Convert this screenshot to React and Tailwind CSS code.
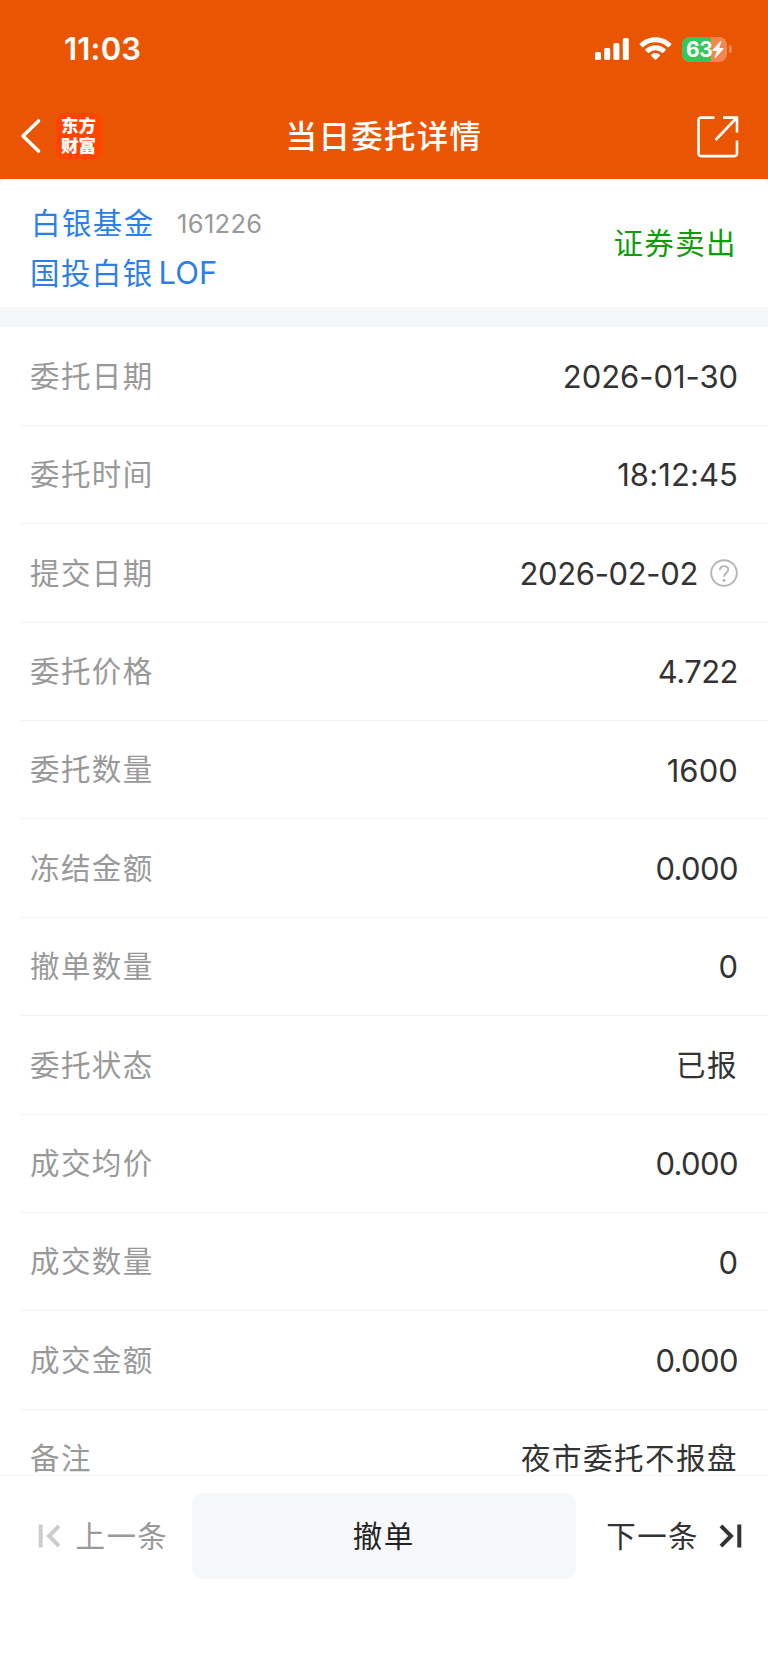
const rows = [
  { label: "委托日期", value: "2026-01-30", spacing: "tracking-[-0.05px]" },
  { label: "委托时间", value: "18:12:45", spacing: "tracking-[0.1px]" },
  { label: "提交日期", value: "2026-02-02", spacing: "tracking-[-0.35px]", help: true },
  { label: "委托价格", value: "4.722", spacing: "tracking-[-0.5px]" },
  { label: "委托数量", value: "1600", spacing: "tracking-[0.1px]" },
  { label: "冻结金额", value: "0.000", spacing: "tracking-[-0.6px]" },
  { label: "撤单数量", value: "0", spacing: "tracking-normal" },
  { label: "委托状态", value: "已报", cjk: true },
  { label: "成交均价", value: "0.000", spacing: "tracking-[-0.6px]" },
  { label: "成交数量", value: "0", spacing: "tracking-normal" },
  { label: "成交金额", value: "0.000", spacing: "tracking-[-0.6px]" },
  { label: "备注", value: "夜市委托不报盘", cjk: true },
];

const StatusBar = () => (
  <div className="flex h-[98px] items-center justify-between pl-[64px] pr-[36px]">
    <span className="pb-px text-[31px] leading-none font-semibold tracking-[0.2px]">11:03</span>
    <div className="flex items-center">
      {/* Signal */}
      <svg width="34" height="24" viewBox="0 0 34 24" fill="currentColor">
        <rect x="0" y="15" width="6" height="8" rx="1.6" />
        <rect x="9.2" y="11" width="6" height="12" rx="1.6" />
        <rect x="18.4" y="6" width="6" height="17" rx="1.6" />
        <rect x="27.8" y="1" width="6" height="22" rx="1.6" />
      </svg>
      {/* Wifi */}
      <svg className="ml-[10px]" width="33" height="24" viewBox="0 0 33 24" fill="currentColor">
        <path d="M16.5 .2c6.100 0 11.600 2.400 15.700 6.300.4.4.4.9 0 1.300l-2.300 2.300c-.4.4-.9.4-1.300 0-3.200-3-7.400-4.800-12.100-4.800S7.600 7.100 4.400 10.100c-.4.4-.9.4-1.300 0L.8 7.800c-.4-.4-.4-.9 0-1.300C4.900 2.600 10.400.2 16.500.2Z" />
        <path d="M16.500 8.200c3.900 0 7.400 1.500 10 3.900.4.4.4.9 0 1.300l-2.400 2.300c-.4.4-.9.4-1.300 0-1.700-1.500-3.900-2.400-6.300-2.400s-4.600.9-6.300 2.400c-.4.4-.9.4-1.300 0l-2.400-2.300c-.4-.4-.4-.9 0-1.300 2.600-2.400 6.100-3.900 10-3.900Z" />
        <path d="M16.500 16c1.700 0 3.200.6 4.300 1.600.4.400.4.900 0 1.300l-3.600 3.600c-.4.4-1 .4-1.400 0l-3.600-3.600c-.4-.4-.4-.9 0-1.300 1.100-1 2.600-1.600 4.300-1.600Z" />
      </svg>
      {/* Battery */}
      <div className="relative ml-[10.5px] flex h-[25px] w-[45px] items-center overflow-hidden rounded-[8px] bg-[#f08850]">
        <div className="h-full w-[29px] bg-[#34c759]" />
        <span className="absolute left-[4px] text-[21px] leading-[25px] font-bold tracking-[-0.5px]">63</span>
        <svg className="absolute left-[30px] top-[4px]" width="12" height="17" viewBox="0 0 12 17" fill="currentColor">
          <path d="M8.300.3.6 9c-.4.500-.2 1 .4 1h4l-2.200 6.100c-.2.700.5 1.100 1 .5L11.500 8c.4-.5.200-1-.4-1H7.200L9.300.8c.2-.7-.5-1-1-.5Z" />
        </svg>
      </div>
      <div className="ml-[2px] h-[8px] w-[3px] rounded-r-full bg-[#f08850]" />
    </div>
  </div>
);

const NavBar = () => (
  <div className="grid h-[77px] grid-cols-[1fr_auto_1fr] items-center pl-[20px] pr-[28px]">
    <div className="flex items-center pb-px">
      <svg width="22" height="36" viewBox="0 0 22 36" fill="none" stroke="currentColor" strokeWidth="3.6" strokeLinecap="round" strokeLinejoin="round">
        <path d="M18.500 3 3 18l15.500 15" />
      </svg>
      <div className="ml-[13.5px] flex h-[46px] w-[46px] flex-col items-center justify-center rounded-[9px] bg-[#ff4400] pb-px text-[17.5px] leading-[19.5px] font-black">
        <span>东方</span>
        <span>财富</span>
      </div>
    </div>
    <h1 className="pt-px pl-[8px] text-[31.5px] leading-none font-medium tracking-[1.3px]">当日委托详情</h1>
    <svg className="justify-self-end" width="44" height="44" viewBox="0 0 44 44" fill="none" stroke="currentColor" strokeWidth="2.6">
      <path d="M18.500 2.600H5a2.500 2.500 0 0 0-2.500 2.500v33.500a2.500 2.500 0 0 0 2.500 2.500h33.500a2.500 2.500 0 0 0 2.500-2.500V25.500" />
      <path d="M27 2.600h14V17.500M40.500 3 19.500 25" />
    </svg>
  </div>
);

const Security = () => (
  <div className="flex h-[128px] shrink-0 items-center justify-between rounded-t-[8px] bg-white px-[31px]">
    <div className="flex flex-col pt-[10px] text-[29.5px] leading-[49px] tracking-[1.4px] text-[#2c7fe8]">
      <div className="flex items-center">
        <span>白银基金</span>
        <span className="ml-[22.5px] text-[25.5px] tracking-[0.3px] text-[#999]">161226</span>
      </div>
      <div className="-ml-px">
        国投白银<span className="ml-[5px] text-[31px] tracking-normal">LOF</span>
      </div>
    </div>
    <span className="text-[29.5px] tracking-[1.4px] text-[#0a9f0a]">证券卖出</span>
  </div>
);

const HelpIcon = () => (
  <svg className="ml-[12px]" width="28" height="28" viewBox="0 0 28 28" fill="none" stroke="#b5b5b5" strokeWidth="1.9">
    <circle cx="14" cy="14" r="12.8" />
    <path d="M9.900 11.200c0-2.500 1.700-4.100 4.100-4.100s4.200 1.500 4.200 3.700c0 3.200-4.200 3.300-4.200 7" />
    <circle cx="14" cy="21.2" r="1.5" fill="#b5b5b5" stroke="none" />
  </svg>
);

const Row = ({ label, value, spacing, help, cjk }) => (
  <div className="ml-[20px] flex h-[98.4px] items-center justify-between border-b border-[#f3f3f5] pt-px pl-[10px] pr-[30px] leading-none">
    <span className="text-[29.5px] tracking-[1.4px] text-[#999]">{label}</span>
    <div className="flex items-center text-[#333]">
      <span className={cjk ? "text-[29.5px] tracking-[1.5px]" : `text-[31px] ${spacing}`}>{value}</span>
      {help && <HelpIcon />}
    </div>
  </div>
);

const BottomBar = () => (
  <div className="flex flex-1 items-start border-t border-[#f5f5f7] bg-white pt-[17px] text-[29.5px] tracking-[1.4px]">
    <div className="flex h-[86px] w-[192px] items-center pl-[37.5px] text-[#999]">
      <svg width="23" height="24" viewBox="0 0 23 24" fill="none" stroke="#ccc" strokeWidth="4">
        <path d="M2.700.5v23M21 1.800 11 12l10 10.200" />
      </svg>
      <span className="ml-[15px]">上一条</span>
    </div>
    <button className="h-[86px] w-[383.5px] rounded-[9px] bg-[#f7f8fa] tracking-[1.4px] text-[#222]">撤单</button>
    <div className="flex h-[86px] flex-1 items-center justify-end pr-[26px] text-[#333]">
      <span>下一条</span>
      <svg className="ml-[20px]" width="23" height="24" viewBox="0 0 23 24" fill="none" stroke="#333" strokeWidth="4">
        <path d="M20.300.5v23M2 1.800 12 12 2 22.200" />
      </svg>
    </div>
  </div>
);

export default function App() {
  return (
    <div className="flex h-[1663px] w-[768px] flex-col overflow-hidden bg-[#f5f6f8] font-['Inter','Noto_Sans_CJK_SC',sans-serif]">
      <header className="h-[179px] shrink-0 bg-[#ea5504] text-white">
        <StatusBar />
        <NavBar />
      </header>
      <Security />
      <div className="mt-[20px] h-[1148px] shrink-0 overflow-hidden bg-white pt-[0.4px]">
        {rows.map((row) => (
          <Row key={row.label} {...row} />
        ))}
      </div>
      <BottomBar />
    </div>
  );
}
